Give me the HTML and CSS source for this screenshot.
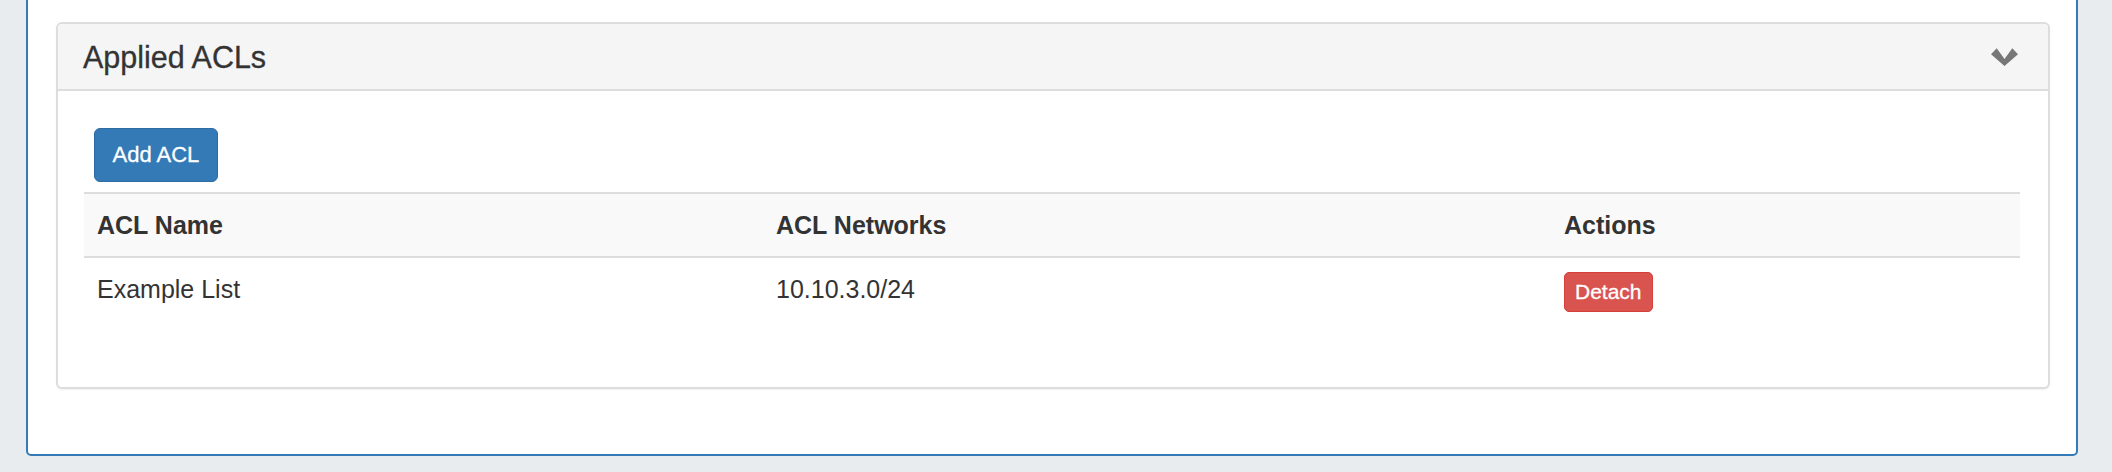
FILE: index.html
```html
<!DOCTYPE html>
<html>
<head>
<meta charset="utf-8">
<title>Applied ACLs</title>
<link rel="stylesheet" href="styles.css">
</head>
<body>
<div class="page">
  <div class="outer-box">
    <div class="panel">
      <div class="panel-heading">
        <h3 class="panel-title">Applied ACLs</h3>
        <svg class="chevron" width="27" height="18" viewBox="0 0 27 18" aria-hidden="true">
          <polygon points="0,6.3 5.7,0.3 13.5,11 21.3,0.3 27,6.3 13.5,18" fill="#777"/>
        </svg>
      </div>
      <div class="panel-body">
        <div class="toolbar">
          <button class="btn btn-primary">Add ACL</button>
        </div>
        <table class="acl-table">
          <colgroup>
            <col class="col-name">
            <col class="col-networks">
            <col class="col-actions">
          </colgroup>
          <thead>
            <tr>
              <th>ACL Name</th>
              <th>ACL Networks</th>
              <th>Actions</th>
            </tr>
          </thead>
          <tbody>
            <tr>
              <td>Example List</td>
              <td>10.10.3.0/24</td>
              <td><button class="btn btn-danger">Detach</button></td>
            </tr>
          </tbody>
        </table>
      </div>
    </div>
  </div>
</div>
</body>
</html>
```

FILE: styles.css
```css
html, body {
  margin: 0;
  padding: 0;
}

body {
  background: #e9ecef;
  font-family: "Liberation Sans", Arial, Helvetica, sans-serif;
  color: #333;
}

.page {
  padding: 0 34px 16px 26px;
}

.outer-box {
  margin-top: -20px;
  border: 2px solid #337ab7;
  border-radius: 5px;
  background: #fff;
  padding: 40px 26px 65px 28px;
}

.panel {
  border: 2px solid #ddd;
  border-radius: 6px;
  background: #fff;
  box-shadow: 0 1px 2px rgba(0, 0, 0, 0.06);
}

.panel-heading {
  display: flex;
  align-items: center;
  justify-content: space-between;
  background: #f5f5f5;
  border-bottom: 2px solid #ddd;
  border-radius: 4px 4px 0 0;
  padding: 17px 30px 16px 25px;
}

.panel-title {
  margin: 0;
  font-size: 30.5px;
  line-height: 32px;
  font-weight: normal;
  color: #333;
  -webkit-text-stroke: 0.3px #333;
}

.chevron {
  display: block;
}

.panel-body {
  padding: 37px 28px 60px 26px;
}

.toolbar {
  padding-left: 10px;
}

.btn {
  font-family: "Liberation Sans", Arial, Helvetica, sans-serif;
  color: #fff;
  cursor: pointer;
  display: inline-block;
  -webkit-text-stroke: 0.3px #fff;
}

.btn-primary {
  background: #337ab7;
  border: 1px solid #2e6da4;
  border-radius: 6px;
  font-size: 22px;
  line-height: 30px;
  padding: 11px 17.5px;
}

.btn-danger {
  background: #d9534f;
  border: 1px solid #d43f3a;
  border-radius: 5px;
  font-size: 21px;
  line-height: 28px;
  padding: 5px 10px;
  vertical-align: top;
  margin-top: -1px;
}

.acl-table {
  margin-top: 10px;
  width: 100%;
  border-collapse: collapse;
  table-layout: fixed;
  border-top: 2px solid #ddd;
}

.col-name {
  width: 679px;
}

.col-networks {
  width: 788px;
}

.col-actions {
  width: 469px;
}

.acl-table thead tr {
  background: #f9f9f9;
}

.acl-table th,
.acl-table td {
  text-align: left;
  font-size: 25px;
  line-height: 32px;
  padding: 15px 13px;
  vertical-align: top;
  color: #333;
}

.acl-table th {
  font-weight: bold;
  border-bottom: 2px solid #ddd;
}
```
